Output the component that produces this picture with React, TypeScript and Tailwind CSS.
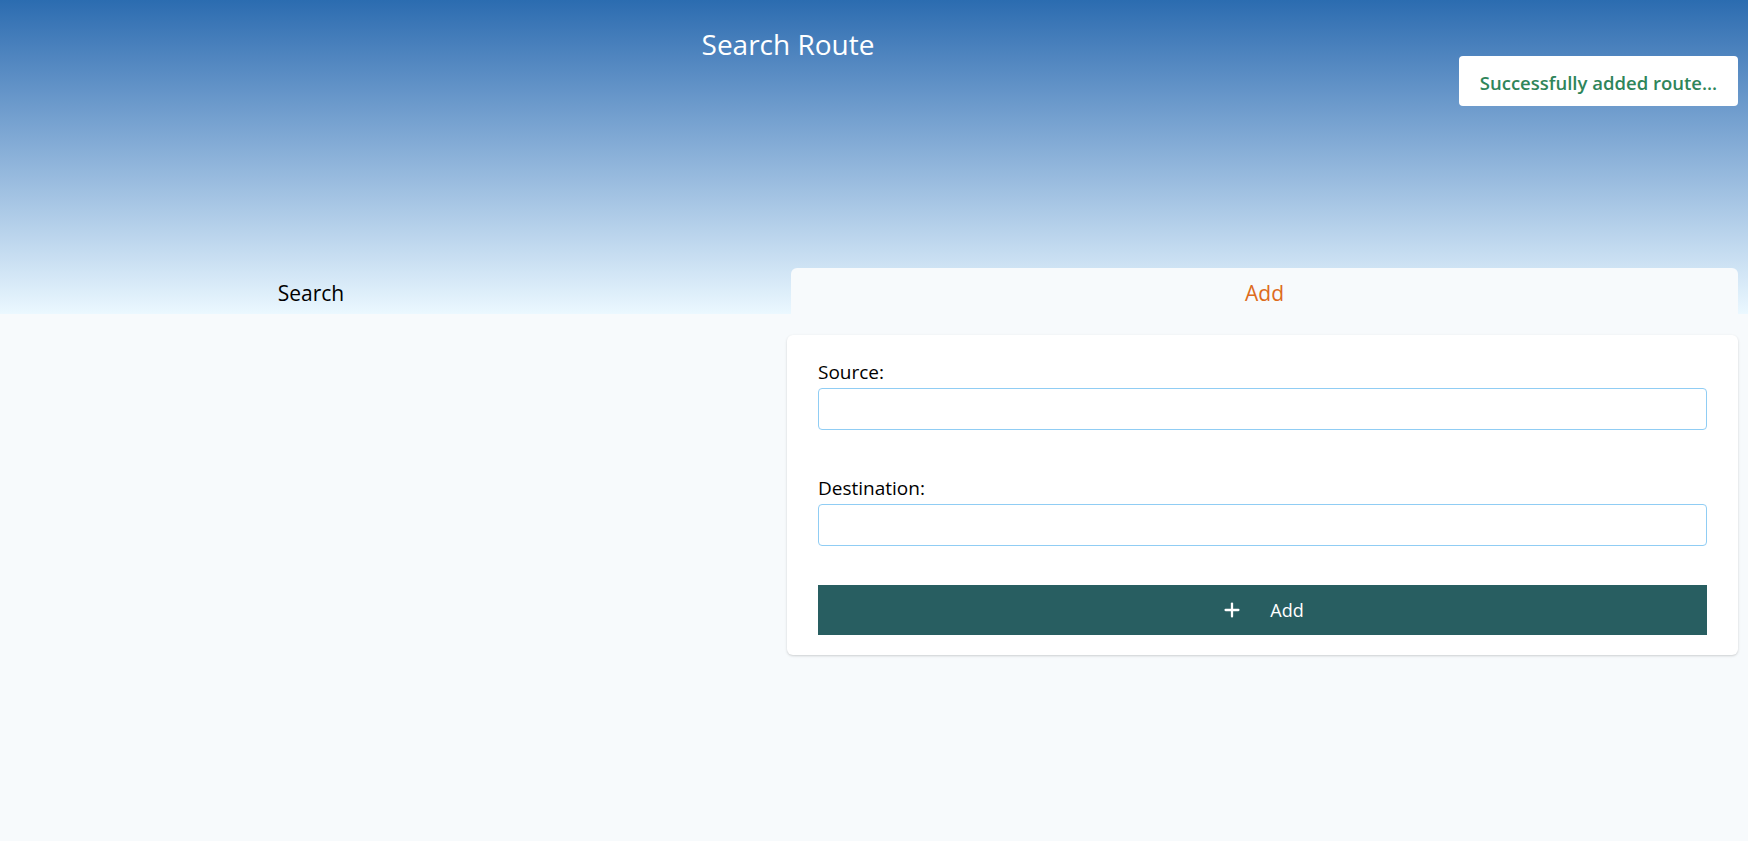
import { Plus } from 'lucide-react';

export default function App() {
  return (
    <div className="min-h-screen bg-[#F7FAFC] font-['Open_Sans','Noto_Sans',sans-serif] text-black">
      {/* Header */}
      <header className="relative h-[314px] bg-linear-to-b from-[#2B6CB0] to-[#EBF8FF] flex flex-col">
        <div className="w-[1576px] pt-[26px] text-center">
          <h1 className="text-[28px] leading-[36px] text-white">Search Route</h1>
        </div>

        {/* Toast */}
        <div className="absolute right-[10px] top-[56px] w-[279px] h-[50px] rounded-[4px] bg-white flex items-center justify-center pt-[3px]">
          <span className="text-[18.5px] font-semibold text-[#2F855A]">Successfully added route...</span>
        </div>

        {/* Tabs */}
        <div className="mt-auto flex h-[46px]">
          <div className="w-[622px] flex items-center justify-center pt-[6px] text-[21px]">Search</div>
          <div className="w-[169px]" />
          <div className="flex-1 mr-[10px] rounded-t-md bg-[#F7FAFC] flex items-center justify-center pt-[6px] text-[21px] text-[#DD6B20]">
            Add
          </div>
        </div>
      </header>

      {/* Content */}
      <main className="flex">
        <div className="w-[787px]" />
        <div className="flex-1 pr-[10px] pt-[21px]">
          <div className="bg-white rounded-md shadow-[0_1px_3px_rgba(0,0,0,0.12),0_1px_2px_rgba(0,0,0,0.06)] px-[31px] pt-[22px] pb-[20px]">
            <label className="block text-[19px] leading-[30px] mb-[1px]">Source:</label>
            <input className="block w-full h-[42px] rounded-[4px] border border-[#90CDF4] bg-white px-4 outline-none" />

            <label className="block text-[19px] leading-[30px] mt-[43px] mb-[1px]">Destination:</label>
            <input className="block w-full h-[42px] rounded-[4px] border border-[#90CDF4] bg-white px-4 outline-none" />

            <button className="mt-[39px] w-full h-[50px] bg-[#285E61] text-white flex items-center justify-center">
              <Plus className="w-[22px] h-[22px]" strokeWidth={2.5} />
              <span className="ml-[27px] text-[18px]">Add</span>
            </button>
          </div>
        </div>
      </main>
    </div>
  );
}
